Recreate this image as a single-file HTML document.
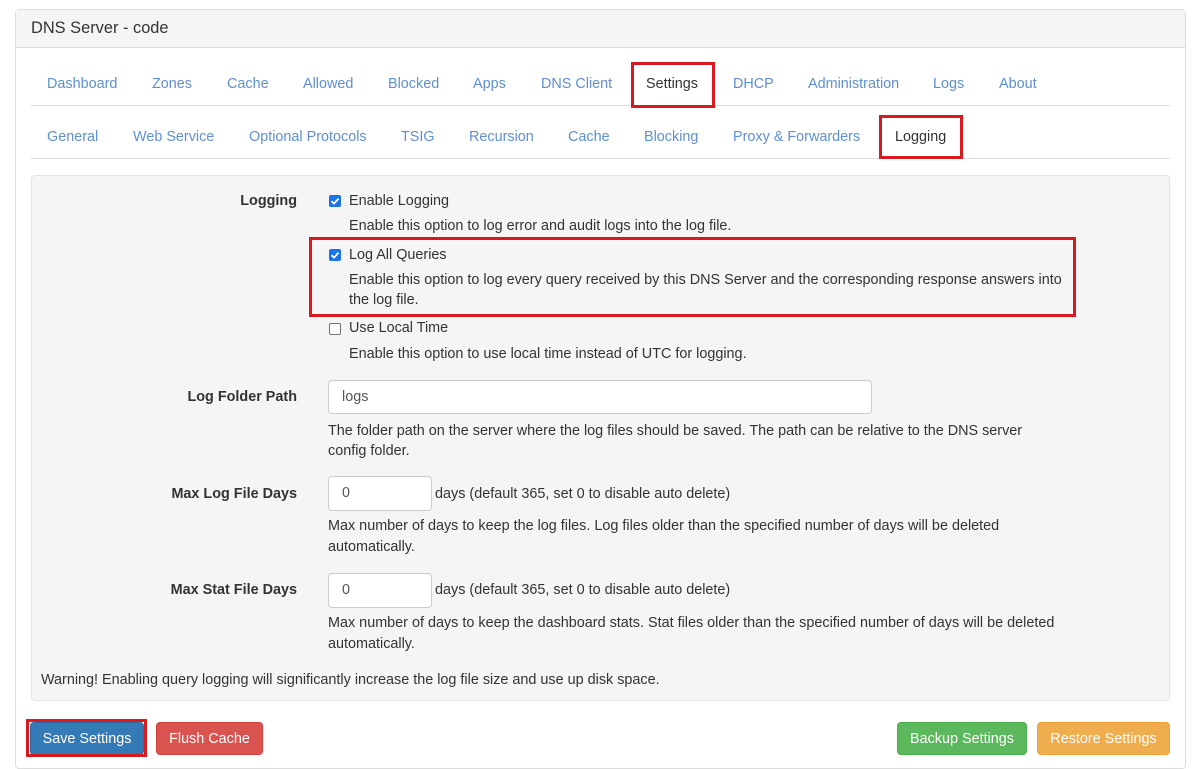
<!DOCTYPE html>
<html><head><style>
body{margin:0;width:1200px;height:762px;background:#fff;font-family:"Liberation Sans",Arial,sans-serif;font-size:14.4px;color:#333;position:relative;overflow:hidden}
.a{position:absolute;white-space:nowrap;line-height:20px}
.t{color:#5f8fce;transform:translateY(-10px)}
.tl{color:#333}
.r{position:absolute;border:3px solid #d71920;box-sizing:border-box}
.lbl{position:absolute;right:903px;font-weight:bold;line-height:20px}
.cb{position:absolute;left:329px;width:12px;height:12px;border-radius:2px;box-sizing:border-box}
.on{background:#1a73e8;}
.off{border:1px solid #767676;background:#fff}
.in{position:absolute;background:#fff;border:1px solid #ccc;border-radius:4px;box-sizing:border-box;padding-left:13px;line-height:32px;color:#555}
.btn{position:absolute;top:722px;height:33px;line-height:33px;color:#fff;text-align:center;border-radius:4px;box-sizing:border-box}
</style></head><body>
<div style="position:absolute;left:15px;top:9px;width:1171px;height:760px;border:1px solid #ddd;border-radius:4px;box-sizing:border-box"></div>
<div style="position:absolute;left:16px;top:10px;width:1169px;height:37px;background:#f5f5f5;border-bottom:1px solid #ddd"></div>
<div class="a" style="left:31px;top:18px;font-size:16.4px">DNS Server - code</div>

<div style="position:absolute;left:31px;top:105px;width:1139px;height:1px;background:#ddd"></div>
<div style="position:absolute;left:31px;top:158px;width:1139px;height:1px;background:#ddd"></div>

<div class="a t" style="left:47px;top:84px">Dashboard</div>
<div class="a t" style="left:152px;top:84px">Zones</div>
<div class="a t" style="left:227px;top:84px">Cache</div>
<div class="a t" style="left:303px;top:84px">Allowed</div>
<div class="a t" style="left:388px;top:84px">Blocked</div>
<div class="a t" style="left:473px;top:84px">Apps</div>
<div class="a t" style="left:541px;top:84px">DNS Client</div>
<div class="a t tl" style="left:646px;top:84px">Settings</div>
<div class="a t" style="left:733px;top:84px">DHCP</div>
<div class="a t" style="left:808px;top:84px">Administration</div>
<div class="a t" style="left:933px;top:84px">Logs</div>
<div class="a t" style="left:999px;top:84px">About</div>

<div class="a t" style="left:47px;top:137px">General</div>
<div class="a t" style="left:133px;top:137px">Web Service</div>
<div class="a t" style="left:249px;top:137px">Optional Protocols</div>
<div class="a t" style="left:401px;top:137px">TSIG</div>
<div class="a t" style="left:469px;top:137px">Recursion</div>
<div class="a t" style="left:568px;top:137px">Cache</div>
<div class="a t" style="left:644px;top:137px">Blocking</div>
<div class="a t" style="left:733px;top:137px">Proxy &amp; Forwarders</div>
<div class="a t tl" style="left:895px;top:137px">Logging</div>

<div class="r" style="left:631px;top:62px;width:84px;height:46px"></div>
<div class="r" style="left:879px;top:115px;width:84px;height:44px"></div>

<div style="position:absolute;left:31px;top:175px;width:1139px;height:526px;background:#f5f5f5;border:1px solid #e3e3e3;border-radius:4px;box-sizing:border-box"></div>

<div class="lbl" style="top:191px">Logging</div>
<div class="cb on" style="top:195px"><svg width="12" height="12" style="position:absolute;left:0;top:0"><path d="M2.5 6.2 L5 8.6 L9.6 3.6" stroke="#fff" stroke-width="1.8" fill="none"/></svg></div>
<div class="a" style="left:349px;top:191px">Enable Logging</div>
<div class="a" style="left:349px;top:216px">Enable this option to log error and audit logs into the log file.</div>
<div class="cb on" style="top:249px"><svg width="12" height="12" style="position:absolute;left:0;top:0"><path d="M2.5 6.2 L5 8.6 L9.6 3.6" stroke="#fff" stroke-width="1.8" fill="none"/></svg></div>
<div class="a" style="left:349px;top:245px">Log All Queries</div>
<div class="a" style="left:349px;top:270px">Enable this option to log every query received by this DNS Server and the corresponding response answers into</div>
<div class="a" style="left:349px;top:290px">the log file.</div>
<div class="r" style="left:309px;top:237px;width:767px;height:80px"></div>
<div class="cb off" style="top:323px"></div>
<div class="a" style="left:349px;top:318px">Use Local Time</div>
<div class="a" style="left:349px;top:344px">Enable this option to use local time instead of UTC for logging.</div>

<div class="lbl" style="top:387px">Log Folder Path</div>
<div class="in" style="left:328px;top:380px;width:544px;height:34px">logs</div>
<div class="a" style="left:328px;top:421px">The folder path on the server where the log files should be saved. The path can be relative to the DNS server</div>
<div class="a" style="left:328px;top:441px">config folder.</div>

<div class="lbl" style="top:484px">Max Log File Days</div>
<div class="in" style="left:328px;top:476px;width:104px;height:35px">0</div>
<div class="a" style="left:435px;top:484px">days (default 365, set 0 to disable auto delete)</div>
<div class="a" style="left:328px;top:516px">Max number of days to keep the log files. Log files older than the specified number of days will be deleted</div>
<div class="a" style="left:328px;top:537px">automatically.</div>

<div class="lbl" style="top:580px">Max Stat File Days</div>
<div class="in" style="left:328px;top:573px;width:104px;height:35px">0</div>
<div class="a" style="left:435px;top:580px">days (default 365, set 0 to disable auto delete)</div>
<div class="a" style="left:328px;top:613px">Max number of days to keep the dashboard stats. Stat files older than the specified number of days will be deleted</div>
<div class="a" style="left:328px;top:634px">automatically.</div>

<div class="a" style="left:41px;top:670px">Warning! Enabling query logging will significantly increase the log file size and use up disk space.</div>

<div class="btn" style="left:30px;width:114px;background:#337ab7;border:1px solid #2e6da4">Save Settings</div>
<div class="r" style="left:26px;top:719px;width:121px;height:38px"></div>
<div class="btn" style="left:156px;width:107px;background:#d9534f;border:1px solid #d43f3a">Flush Cache</div>
<div class="btn" style="left:897px;width:130px;background:#5cb85c;border:1px solid #4cae4c">Backup Settings</div>
<div class="btn" style="left:1037px;width:133px;background:#f0ad4e;border:1px solid #eea236">Restore Settings</div>
</body></html>
